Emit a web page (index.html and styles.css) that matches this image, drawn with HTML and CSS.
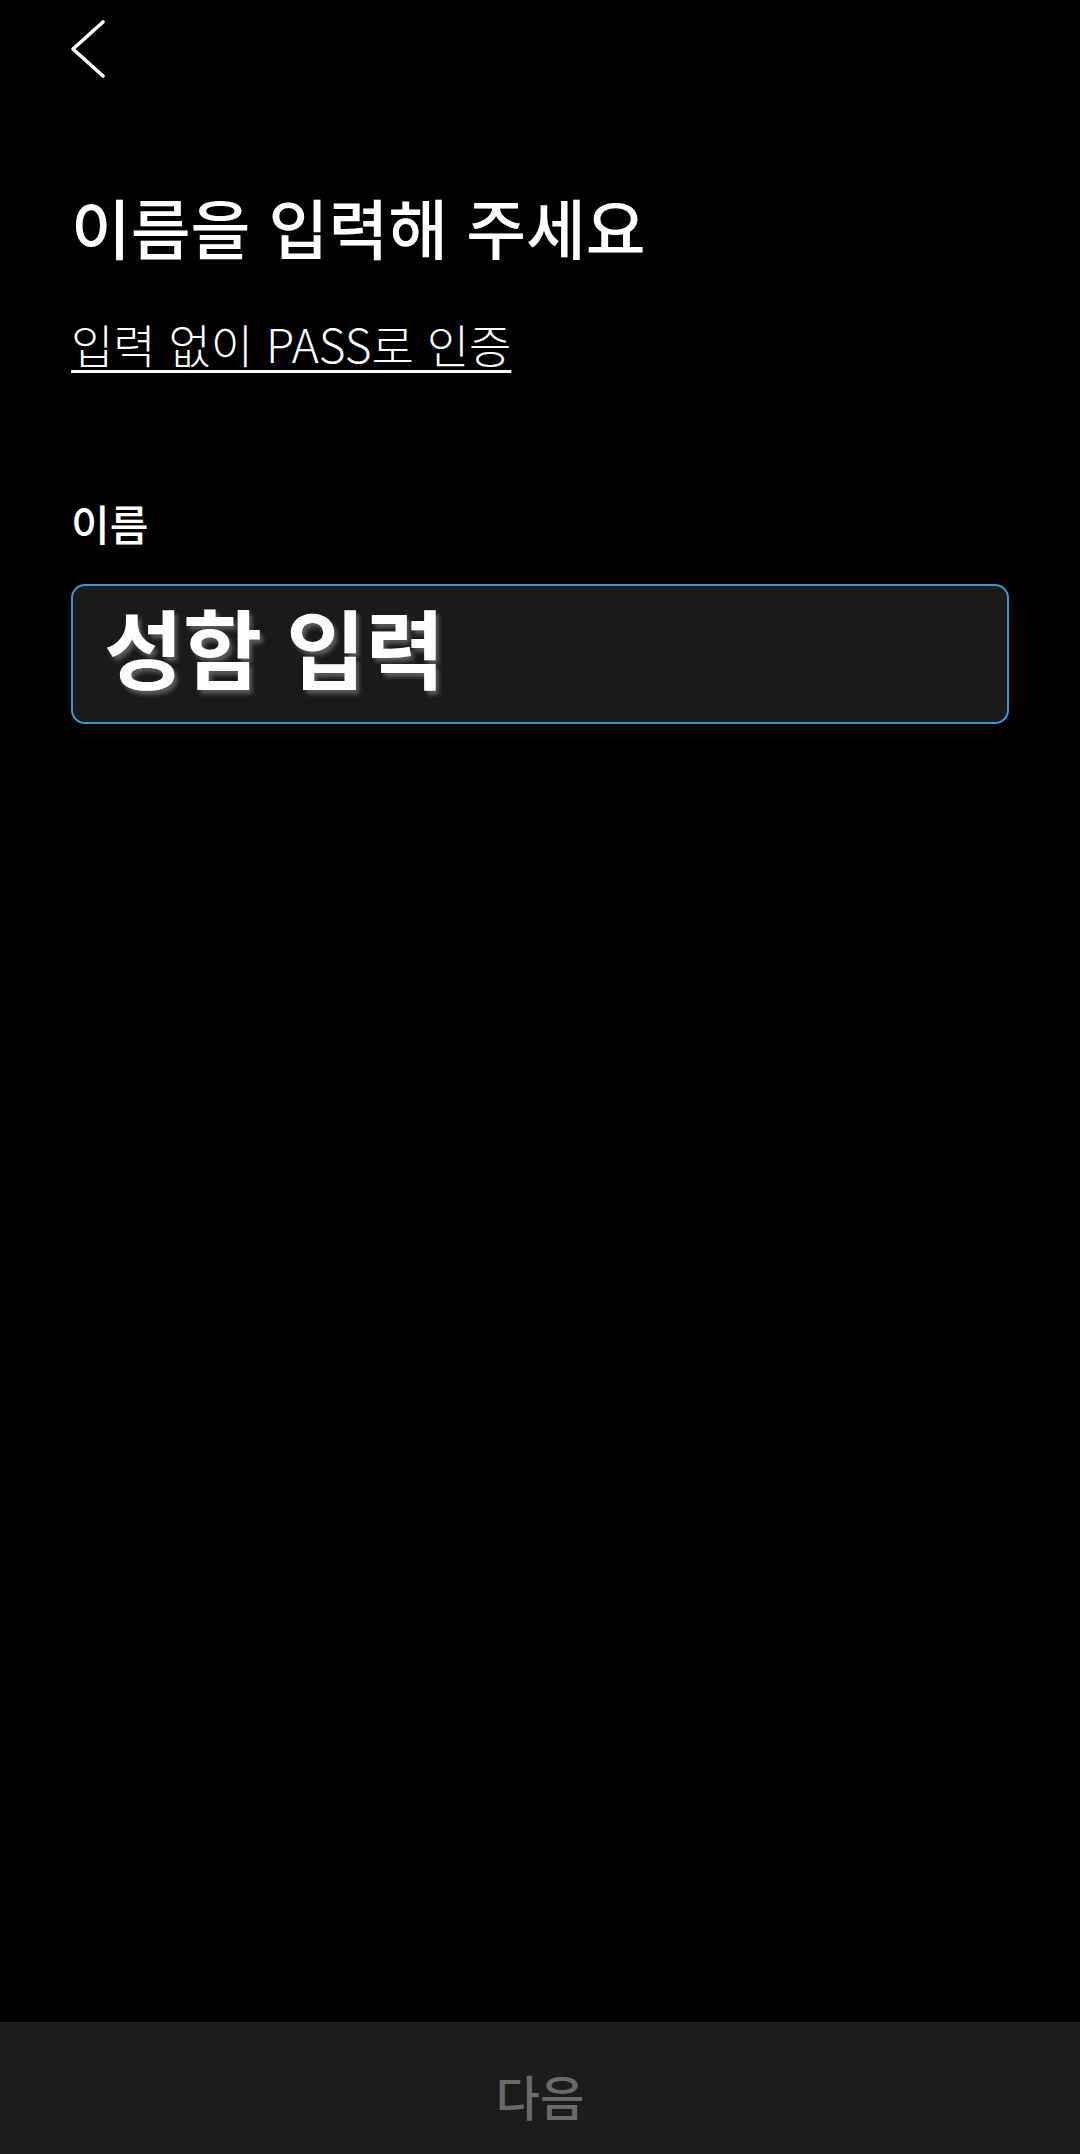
FILE: index.html
```html
<!DOCTYPE html>
<html lang="ko">
<head>
<meta charset="utf-8">
<title>이름 입력</title>
<link rel="stylesheet" href="styles.css">
</head>
<body>
<div class="screen">
  <header class="topbar">
    <button class="back" aria-label="뒤로">
      <svg width="36" height="60" viewBox="0 0 36 60"><path d="M33 3 L3 30 L33 57" fill="none" stroke="#fff" stroke-width="3.6" stroke-linecap="round" stroke-linejoin="round"/></svg>
    </button>
  </header>
  <main class="content">
    <h1 class="title">이름을 입력해 주세요</h1>
    <a class="pass-link" href="#">입력 없이 PASS로 인증</a>
    <div class="field">
      <div class="field-label">이름</div>
      <div class="field-box"><span class="placeholder">성함 입력</span></div>
    </div>
  </main>
  <footer class="bottom">
    <span class="next">다음</span>
  </footer>
</div>
</body>
</html>
```
FILE: styles.css
```css
html, body {
  margin: 0;
  padding: 0;
  background: #000;
}
body {
  font-family: "Noto Sans CJK KR", "Noto Sans", sans-serif;
  color: #fff;
}
.screen {
  width: 1080px;
  height: 2154px;
  display: flex;
  flex-direction: column;
}
.topbar {
  height: 100px;
  padding: 19px 0 0 70px;
  box-sizing: border-box;
}
.back {
  background: none;
  border: 0;
  padding: 0;
  display: block;
  width: 36px;
  height: 60px;
}
.back svg { display: block; }
.content {
  padding: 0 71px;
  display: flex;
  flex-direction: column;
  align-items: flex-start;
}
.title {
  margin: 86px 0 0 0;
  font-size: 65px;
  line-height: 80px;
  font-weight: 500;
  letter-spacing: 0;
  white-space: nowrap;
}
.pass-link {
  margin-top: 49px;
  color: #fff;
  font-size: 46px;
  line-height: 56px;
  font-weight: 300;
  text-decoration: underline;
  text-decoration-thickness: 3px;
  text-underline-offset: 7px;
  white-space: nowrap;
}
.field {
  margin-top: 127px;
  width: 100%;
  display: flex;
  flex-direction: column;
}
.field-label {
  font-size: 42px;
  line-height: 50px;
  font-weight: 500;
}
.field-box {
  margin-top: 36px;
  height: 140px;
  box-sizing: border-box;
  border: 2px solid #3b97cc;
  border-radius: 14px;
  background: #1a1a1a;
  display: flex;
  align-items: center;
  padding: 0 0 16px 31px;
}
.placeholder {
  font-size: 86px;
  font-weight: 700;
  line-height: 1;
  color: #fff;
  letter-spacing: 0;
  text-shadow: 3px 4px 4px rgba(120,120,120,0.7);
}
.bottom {
  margin-top: auto;
  height: 132px;
  background: #1c1c1c;
  display: flex;
  align-items: center;
  justify-content: center;
}
.next {
  font-size: 48px;
  font-weight: 500;
  color: #6a6a6a;
  line-height: 1;
  padding-top: 14px;
}
```
